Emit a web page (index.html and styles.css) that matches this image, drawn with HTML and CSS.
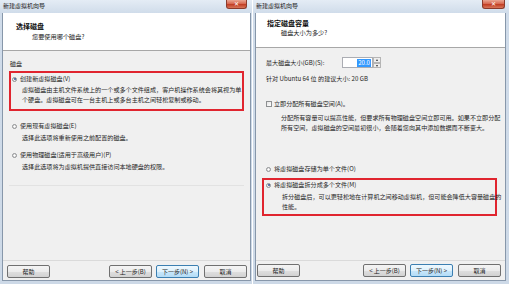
FILE: index.html
```html
<!DOCTYPE html>
<html lang="zh-CN">
<head>
<meta charset="utf-8">
<title>新建虚拟机向导</title>
<link rel="stylesheet" href="styles.css">
</head>
<body>
<div class="desk">
  <div class="win win-left">
    <div class="titlebar"><span class="title">新建虚拟机向导</span><span class="close">✕</span></div>
    <div class="client">
      <div class="header header-left">
        <div class="h-title">选择磁盘</div>
        <div class="h-sub">您要使用哪个磁盘?</div>
      </div>
      <div class="body body-left">
        <div class="group-label">磁盘</div>
        <div class="hl-box hl-left">
          <div class="opt"><span class="radio on"></span>创建新虚拟磁盘(V)</div>
          <div class="desc">虚拟磁盘由主机文件系统上的一个或多个文件组成，客户机操作系统会将其视为单<br>个硬盘。虚拟磁盘可在一台主机上或多台主机之间轻松复制或移动。</div>
        </div>
        <div class="opt opt-out opt-e"><span class="radio"></span>使用现有虚拟磁盘(E)</div>
        <div class="desc desc-out">选择此选项将重新使用之前配置的磁盘。</div>
        <div class="opt opt-out opt-p"><span class="radio"></span>使用物理磁盘(适用于高级用户)(P)</div>
        <div class="desc desc-out">选择此选项将为虚拟机提供直接访问本地硬盘的权限。</div>
        <div class="faint-sep"></div>
      </div>
      <div class="footer">
        <button class="btn">帮助</button>
        <div class="btn-group">
          <button class="btn">&lt; 上一步(B)</button>
          <button class="btn btn-default">下一步(N) &gt;</button>
          <button class="btn btn-cancel">取消</button>
        </div>
      </div>
    </div>
  </div>

  <div class="win win-right">
    <div class="titlebar"><span class="title">新建虚拟机向导</span><span class="close">✕</span></div>
    <div class="client">
      <div class="header header-right">
        <div class="h-title">指定磁盘容量</div>
        <div class="h-sub">磁盘大小为多少?</div>
      </div>
      <div class="body body-right">
        <div class="size-row">
          <span class="size-label">最大磁盘大小(GB)(S):</span>
          <span class="size-input"><span class="sel">20.0</span></span>
          <span class="spin"><span class="spin-up"></span><span class="spin-down"></span></span>
        </div>
        <div class="hint">针对 Ubuntu 64 位 的建议大小: 20 GB</div>
        <div class="opt chk-row"><span class="check"></span>立即分配所有磁盘空间(A)。</div>
        <div class="desc desc-r">分配所有容量可以提高性能，但要求所有物理磁盘空间立即可用。如果不立即分配<br>所有空间，虚拟磁盘的空间最初很小，会随着您向其中添加数据而不断变大。</div>
        <div class="opt opt-o"><span class="radio"></span>将虚拟磁盘存储为单个文件(O)</div>
        <div class="hl-box hl-right">
          <div class="opt"><span class="radio on"></span>将虚拟磁盘拆分成多个文件(M)</div>
          <div class="desc desc-r2">拆分磁盘后，可以更轻松地在计算机之间移动虚拟机，但可能会降低大容量磁盘的<br>性能。</div>
        </div>
      </div>
      <div class="footer">
        <button class="btn">帮助</button>
        <div class="btn-group">
          <button class="btn">&lt; 上一步(B)</button>
          <button class="btn btn-default">下一步(N) &gt;</button>
          <button class="btn btn-cancel">取消</button>
        </div>
      </div>
    </div>
  </div>
</div>
</body>
</html>
```

FILE: styles.css
```css
* { box-sizing: border-box; margin: 0; padding: 0; }
html, body { width: 509px; height: 284px; overflow: hidden; background: #ffffff; }
body {
  font-family: "Noto Sans CJK SC", "Noto Sans", sans-serif;
  font-size: 6.1px;
  line-height: 10px;
  color: #1e1e1e;
}
.desk { display: flex; gap: 1px; height: 284px; }

.win {
  display: flex;
  flex-direction: column;
  height: 284px;
  background: linear-gradient(#e4ecf5, #d0dcea 13px, #cdd9e7);
}
.win-left { width: 252px; padding: 0 1px 3px 2px; }
.win-right { width: 256px; padding: 0 3px 3px 2px; }

.titlebar { height: 13px; position: relative; display: flex; align-items: center; }
.title { font-size: 6px; line-height: 10px; color: #1a1a1a; padding-left: 1px; margin-top: -1px; }
.close {
  position: absolute;
  top: 0;
  right: 4px;
  width: 21px;
  height: 9px;
  border: 1px solid #8b3b2c;
  border-top: none;
  border-radius: 0 0 3px 3px;
  background: linear-gradient(#eaa693, #d6634b 50%, #c0391f 51%, #d8765a);
  color: #ffffff;
  font-size: 6px;
  line-height: 8px;
  text-align: center;
  font-family: "DejaVu Sans", sans-serif;
  font-weight: bold;
}
.win-right .close { right: 1px; width: 23px; }

.client {
  flex: 1;
  display: flex;
  flex-direction: column;
  border: 1px solid #8797aa;
  border-top: none;
  background: #f0f0f0;
}

.header { background: #ffffff; border-bottom: 1px solid #a7a7a7; }
.header-left { height: 38px; padding: 8px 0 0 13px; }
.header-right { height: 35px; padding: 5px 0 0 11px; }
.h-title { font-size: 7px; font-weight: bold; line-height: 10px; color: #111; }
.h-sub { font-size: 6.2px; line-height: 10px; color: #222; }
.header-left .h-sub { margin: 1px 0 0 16px; }
.header-right .h-sub { margin-left: 14px; }

.body { flex: 1; display: flex; flex-direction: column; }
.body-left { padding: 8px 6px 0 6px; }
.body-right { padding: 8px 8px 0 6px; }

.group-label { margin-left: 1px; }

.hl-box { border: 2px solid #e0252f; }
.hl-left { margin-top: 2px; padding: 1px 0 4px 1px; }
.hl-right { margin-top: 4px; padding: 0 0 2px 2px; }

.opt { display: flex; align-items: center; white-space: nowrap; height: 10px; }
.radio {
  width: 5px;
  height: 5px;
  border-radius: 50%;
  border: 1px solid #8e9092;
  background: radial-gradient(#ffffff, #dcdcdc);
  margin-right: 3px;
  flex: none;
  position: relative;
}
.radio.on::after {
  content: "";
  position: absolute;
  left: 0.5px;
  top: 0.5px;
  width: 2px;
  height: 2px;
  border-radius: 50%;
  background: #2f4f8f;
}
.check {
  width: 6px;
  height: 6px;
  border: 1px solid #8e9092;
  background: linear-gradient(135deg, #e4e4e4, #ffffff);
  margin-right: 2px;
  flex: none;
}

.desc { white-space: nowrap; }
.hl-left .desc { margin: 1px 0 0 10px; }
.opt-out { margin-left: 3px; }
.opt-e { margin-top: 10px; }
.opt-p { margin-top: 7px; }
.desc-out { margin: 2px 0 0 13px; }
.faint-sep { margin-top: 13px; height: 1px; background: #e2e2e2; }

.size-row { display: flex; align-items: center; height: 13px; margin-left: 4px; }
.size-label { width: 76px; white-space: nowrap; }
.size-input {
  width: 31px;
  height: 11px;
  border: 1px solid #abadb3;
  background: #ffffff;
  display: flex;
  justify-content: flex-end;
  align-items: center;
  padding-right: 1px;
}
.sel { background: #3399ff; color: #ffffff; line-height: 8px; padding: 0 1px; }
.spin { width: 8px; height: 11px; display: flex; flex-direction: column; }
.spin-up, .spin-down {
  flex: 1;
  border: 1px solid #b5b5b5;
  background: #eeeeee;
  position: relative;
}
.spin-up::after, .spin-down::after {
  content: "";
  position: absolute;
  left: 1.5px;
  top: 1px;
  border-left: 1.5px solid transparent;
  border-right: 1.5px solid transparent;
}
.spin-up::after { border-bottom: 2px solid #333; }
.spin-down::after { border-top: 2px solid #333; }

.hint { margin: 5px 0 0 4px; white-space: nowrap; }
.chk-row { margin: 15px 0 0 4px; }
.desc-r { margin: 4px 0 0 19px; }
.opt-o { margin: 31px 0 0 4px; }
.desc-r2 { margin: 2px 0 0 16px; }

.footer {
  height: 20px;
  border-top: 1px solid #dadada;
  padding: 4px 3px 0 4px;
  display: flex;
  align-items: flex-start;
}
.win-right .footer { padding: 3px 4px 0 1px; }
.btn-group { margin-left: auto; display: flex; gap: 4px; }
.btn {
  width: 43px;
  height: 13px;
  border: 1px solid #707070;
  border-radius: 2px;
  background: linear-gradient(#f4f4f4, #ececec 50%, #dfdfdf 51%, #d2d2d2);
  font-family: inherit;
  font-size: 6px;
  line-height: 11px;
  color: #1e1e1e;
  text-align: center;
  white-space: nowrap;
}
.btn-default {
  border-color: #3c7fb1;
  background: linear-gradient(#eef8fe, #def1fc 50%, #c8e7fb 51%, #b4dcf6);
}
.btn-cancel { margin-left: 1px; }
```
